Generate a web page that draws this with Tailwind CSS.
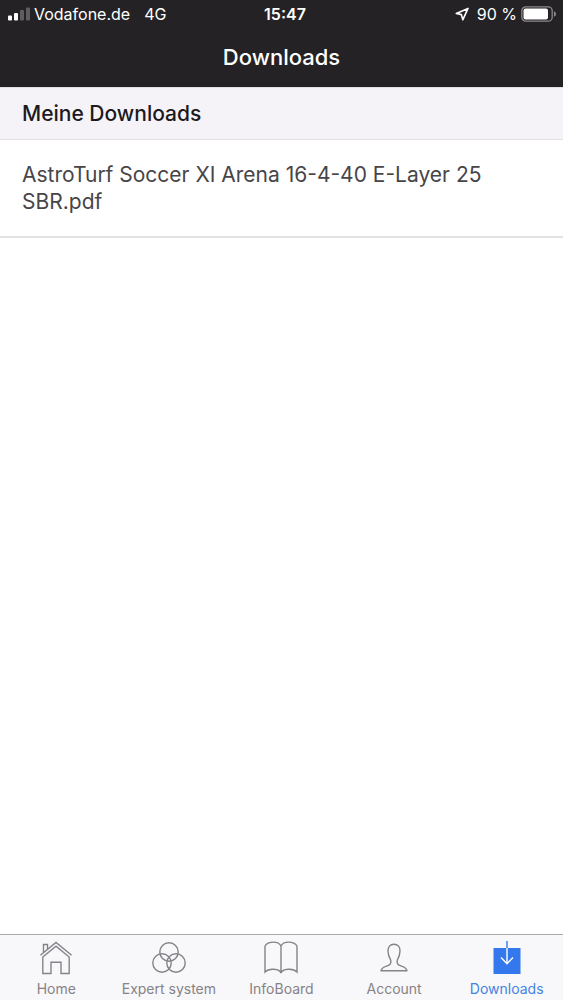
<!DOCTYPE html>
<html lang="de">
<head>
    <meta charset="UTF-8">
    <meta name="viewport" content="width=device-width, initial-scale=1.0">
    <title>Downloads</title>
    <script src="https://cdn.jsdelivr.net/npm/@tailwindcss/browser@4"></script>
</head>
<body class="flex flex-col min-h-screen bg-white font-['Inter','Liberation_Sans',sans-serif]">
    <header class="bg-[#242225] text-white">
        <!-- Status bar -->
        <div class="grid grid-cols-3 items-center h-7 pl-2 pr-[7px] text-base whitespace-nowrap">
            <div class="flex items-center">
                <svg class="w-[22px] h-[14px] mr-1" viewBox="0 0 22 14" fill="#fff">
                    <rect x="0" y="8.5" width="4" height="5" rx="1"/>
                    <rect x="6" y="6" width="4" height="7.5" rx="1"/>
                    <rect x="12" y="3" width="4" height="10.5" rx="1" fill="#5f5d60"/>
                    <rect x="18" y="0.5" width="4" height="13" rx="1" fill="#5f5d60"/>
                </svg>
                <span>Vodafone.de</span>
                <span class="ml-[14px]">4G</span>
            </div>
            <div class="pl-[6px] text-center font-semibold">15:47</div>
            <div class="flex items-center justify-end">
                <svg class="w-[14px] h-[14px] mr-2" viewBox="0 0 14 14" fill="none" stroke="#fff" stroke-width="1.6" stroke-linejoin="round">
                    <path d="M13 1.4L1.3 6.4L6.4 7.6L7.8 12.8Z"/>
                </svg>
                <span>90 %</span>
                <svg class="w-[35px] h-[16px] ml-1" viewBox="0 0 35 16">
                    <rect x="0.8" y="0.8" width="30.4" height="14.4" rx="4" fill="none" stroke="#8c8a8d" stroke-width="1.3"/>
                    <rect x="2.5" y="2.5" width="24.5" height="11" rx="2" fill="#fff"/>
                    <path d="M33 5.3Q35 6 35 8T33 10.7Z" fill="#8c8a8d"/>
                </svg>
            </div>
        </div>
        <h1 class="pt-4 pb-4 text-center text-[22px] leading-[27px] font-medium">Downloads</h1>
    </header>

    <main class="flex-1">
        <h2 class="px-[22px] py-3 bg-[#f5f3f7] border-y border-[#e3e1e5] text-[21px] leading-[27px] font-medium text-[#1c1a1d]">Meine Downloads</h2>
        <ul>
            <li class="border-b-2 border-[#e3e3e5]">
                <a href="#" class="block px-[22px] pt-[21px] pb-[21px] text-[21px] leading-[27px] text-[#474548]">AstroTurf Soccer XI Arena 16-4-40 E-Layer 25 SBR.pdf</a>
            </li>
        </ul>
    </main>

    <!-- Tab bar -->
    <nav class="grid grid-cols-5 h-[66px] pt-[5px] bg-[#f8f7fa] border-t border-[#aaa8ab] text-sm leading-5 text-[#858387]">
        <a href="#" class="flex flex-col items-center">
            <svg class="w-9 h-9 mb-[3px]" viewBox="0 0 36 36" fill="none" stroke="currentColor" stroke-width="1.4">
                <path d="M2.4 15.2L18 2.4L33.6 15.2M5.5 12.5V4.5H9.5V9.2M4.8 17L18 6.2L31.2 17V33.5H23V22.3H13V33.5H4.8Z"/>
            </svg>
            <span>Home</span>
        </a>
        <a href="#" class="flex flex-col items-center">
            <svg class="w-9 h-9 mb-[3px]" viewBox="0 0 36 36" fill="none" stroke="currentColor" stroke-width="1.4">
                <circle cx="18" cy="12" r="9.2"/>
                <circle cx="11" cy="23" r="9.2"/>
                <circle cx="25" cy="23" r="9.2"/>
            </svg>
            <span class="whitespace-nowrap">Expert system</span>
        </a>
        <a href="#" class="flex flex-col items-center">
            <svg class="w-9 h-9 mb-[3px]" viewBox="0 0 36 36" fill="none" stroke="currentColor" stroke-width="1.4">
                <path d="M18 6V33C16.5 28.7 6 27.7 2 32V6C5.2.9 15.5.8 18 6C20.5.8 30.8.9 34 6V32C30 27.7 19.5 28.7 18 33"/>
            </svg>
            <span>InfoBoard</span>
        </a>
        <a href="#" class="flex flex-col items-center">
            <svg class="w-9 h-9 mb-[3px]" viewBox="0 0 36 36" fill="none" stroke="currentColor" stroke-width="1.4" stroke-linejoin="round">
                <path d="M18 4.2C14 4.2 11.8 7 12 11C12.1 15 13 17 14.4 19.3C15.2 21.6 15 23.7 13.4 24.9C10.8 26.5 5.6 26.4 5 30.8H31C30.4 26.4 25.2 26.5 22.6 24.9C21 23.7 20.8 21.6 21.6 19.3C23 17 23.9 15 24 11C24.2 7 22 4.2 18 4.2Z"/>
            </svg>
            <span>Account</span>
        </a>
        <a href="#" class="flex flex-col items-center text-[#4583e3]" aria-current="page">
            <svg class="w-9 h-9 mb-[3px]" viewBox="0 0 36 36" fill="none">
                <rect x="4.5" y="8" width="27" height="26" fill="#3478ee"/>
                <path d="M18 1V8" stroke="#3478ee" stroke-width="1.4"/>
                <path d="M18 8V23.5M12 17.5L18 23.7L24 17.5" stroke="#fff" stroke-width="1.4"/>
            </svg>
            <span>Downloads</span>
        </a>
    </nav>
</body>
</html>
